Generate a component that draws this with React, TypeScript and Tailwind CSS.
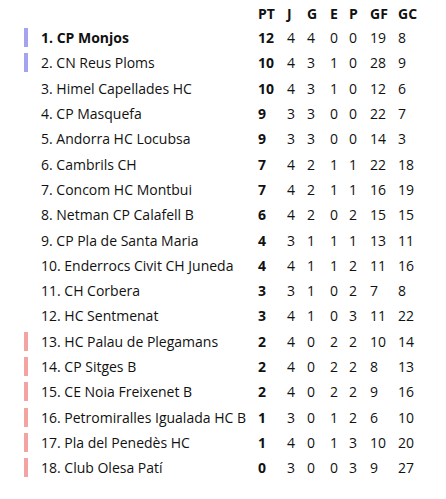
const teams: [string, number, number, number, number, number, number, number, string?][] = [
  ["1. CP Monjos", 12, 4, 4, 0, 0, 19, 8, "up"],
  ["2. CN Reus Ploms", 10, 4, 3, 1, 0, 28, 9, "up"],
  ["3. Himel Capellades HC", 10, 4, 3, 1, 0, 12, 6],
  ["4. CP Masquefa", 9, 3, 3, 0, 0, 22, 7],
  ["5. Andorra HC Locubsa", 9, 3, 3, 0, 0, 14, 3],
  ["6. Cambrils CH", 7, 4, 2, 1, 1, 22, 18],
  ["7. Concom HC Montbui", 7, 4, 2, 1, 1, 16, 19],
  ["8. Netman CP Calafell B", 6, 4, 2, 0, 2, 15, 15],
  ["9. CP Pla de Santa Maria", 4, 3, 1, 1, 1, 13, 11],
  ["10. Enderrocs Civit CH Juneda", 4, 4, 1, 1, 2, 11, 16],
  ["11. CH Corbera", 3, 3, 1, 0, 2, 7, 8],
  ["12. HC Sentmenat", 3, 4, 1, 0, 3, 11, 22],
  ["13. HC Palau de Plegamans", 2, 4, 0, 2, 2, 10, 14, "down"],
  ["14. CP Sitges B", 2, 4, 0, 2, 2, 8, 13, "down"],
  ["15. CE Noia Freixenet B", 2, 4, 0, 2, 2, 9, 16, "down"],
  ["16. Petromiralles Igualada HC B", 1, 3, 0, 1, 2, 6, 10, "down"],
  ["17. Pla del Penedès HC", 1, 4, 0, 1, 3, 10, 20, "down"],
  ["18. Club Olesa Patí", 0, 3, 0, 0, 3, 9, 27, "down"],
]

const colW = ["w-[29px]", "w-[20px]", "w-[23px]", "w-[19px]", "w-[21px]", "w-[28px]", "w-[28px]"]
const heads = ["PT", "J", "G", "E", "P", "GF", "GC"]

export default function App() {
  return (
    <div className="w-[446px] h-[499px] bg-white text-[14px] text-[#111] font-['Open_Sans',sans-serif] pt-[2px]">
      <div className="flex items-center h-[23px]">
        <div className="w-[258px]" />
        {heads.map((h, i) => (
          <div key={h} className={`${colW[i]} font-bold`}>
            {h}
          </div>
        ))}
      </div>
      {teams.map((t, idx) => (
        <div key={idx} className="flex items-center h-[25.3px]">
          <div className="w-[24px]" />
          <div
            className={
              t[8] === "up"
                ? "w-[4px] h-[19px] bg-[#a3a3f0]"
                : t[8] === "down"
                  ? "w-[4px] h-[19px] bg-[#f4a3a3]"
                  : "w-[4px] h-[19px]"
            }
          />
          <div className={`w-[230px] pl-[13px] whitespace-nowrap ${idx === 0 ? "font-bold" : ""}`}>
            {t[0]}
          </div>
          {[t[1], t[2], t[3], t[4], t[5], t[6], t[7]].map((v, i) => (
            <div key={i} className={`${colW[i]} ${i === 0 ? "font-bold" : ""}`}>
              {v}
            </div>
          ))}
        </div>
      ))}
    </div>
  )
}
